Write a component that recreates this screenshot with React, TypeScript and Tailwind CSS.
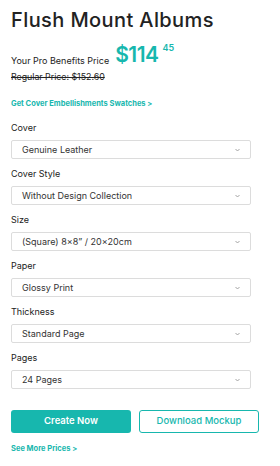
import React from "react";

const fields = [
  { label: "Cover", value: "Genuine Leather" },
  { label: "Cover Style", value: "Without Design Collection" },
  { label: "Size", value: "(Square) 8x8\u201d / 20x20cm" },
  { label: "Paper", value: "Glossy Print" },
  { label: "Thickness", value: "Standard Page" },
  { label: "Pages", value: "24 Pages" },
];

const Chevron = () => (
  <svg width="5" height="4" viewBox="0 0 5 4" className="text-[#9a9a9a]">
    <path d="M0.5 1 L2.5 3 L4.5 1" fill="none" stroke="currentColor" strokeWidth="0.9" />
  </svg>
);

const App = () => {
  return (
    <div className="w-[280px] h-[466px] bg-white px-[11px] pt-[8px] font-['Inter',sans-serif] text-[#222]">
      <h1 className="text-[20px] font-medium leading-[24px] tracking-[0.4px]">Flush Mount Albums</h1>

      <div className="flex items-end mt-[10px] h-[26px]">
        <span className="text-[9px] leading-[12px] mb-[1px]">Your Pro Benefits Price</span>
        <span className="ml-[6px] text-[21px] font-semibold leading-[26px] tracking-[-0.5px] text-[#17b7ae]">$114</span>
        <span className="ml-[4px] self-start text-[9px] font-semibold leading-[10px] text-[#17b7ae] mt-[1px]">45</span>
      </div>

      <p className="mt-[3px] text-[8.8px] leading-[12px] line-through">Regular Price: $152.60</p>

      <a className="block mt-[16px] text-[7.5px] font-bold leading-[10px] text-[#17b7ae]">
        Get Cover Embellishments Swatches &gt;
      </a>

      <div className="mt-[12px] flex flex-col gap-[8px]">
        {fields.map((f) => (
          <div key={f.label} className="w-[240px]">
            <div className="text-[9px] leading-[14px] mb-[5px]">{f.label}</div>
            <div className="h-[19px] border border-[#dcdcdc] rounded-[2px] flex items-center justify-between pl-[10px] pr-[10px]">
              <span className="text-[9px] text-[#333]">{f.value}</span>
              <Chevron />
            </div>
          </div>
        ))}
      </div>

      <div className="mt-[21px] flex gap-[8px]">
        <button className="w-[120px] h-[23px] rounded-[3px] bg-[#17b7ae] text-white text-[9.5px] font-semibold">
          Create Now
        </button>
        <button className="w-[120px] h-[23px] rounded-[3px] border border-[#17b7ae] text-[#17b7ae] text-[9.5px] font-medium">
          Download Mockup
        </button>
      </div>

      <a className="block mt-[11px] text-[7.5px] font-bold leading-[10px] text-[#17b7ae]">See More Prices &gt;</a>
    </div>
  );
};

export default App;
